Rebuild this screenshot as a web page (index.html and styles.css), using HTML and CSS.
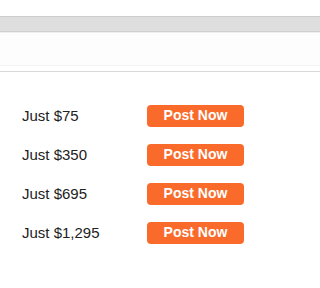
FILE: index.html
```html
<!DOCTYPE html>
<html>
<head>
<meta charset="utf-8">
<link rel="stylesheet" href="styles.css">
</head>
<body>
<div class="page">
  <div class="spacer"></div>
  <div class="tabbar"></div>
  <div class="subbar"></div>
  <div class="gap"></div>
  <div class="list">
    <div class="row"><span class="price">Just $75</span><span class="btn">Post Now</span></div>
    <div class="row"><span class="price">Just $350</span><span class="btn">Post Now</span></div>
    <div class="row"><span class="price">Just $695</span><span class="btn">Post Now</span></div>
    <div class="row"><span class="price">Just $1,295</span><span class="btn">Post Now</span></div>
  </div>
</div>
</body>
</html>
```
FILE: styles.css
```css
html, body {
  margin: 0;
  padding: 0;
  background: #ffffff;
}
.page {
  width: 100%;
  height: 288px;
  overflow: hidden;
  font-family: "Liberation Sans", Arial, sans-serif;
}
.spacer {
  height: 16px;
}
.tabbar {
  height: 14px;
  background: #dedede;
  border-top: 1px solid #cdcdcd;
  border-bottom: 1px solid #d0d0d0;
}
.subbar {
  height: 32px;
  background: #fdfdfd;
  border-top: 1px solid #eeeeee;
  border-bottom: 1px solid #f3f3f3;
}
.gap {
  height: 5px;
}
.list {
  border-top: 1px solid #d9d9d9;
  padding-top: 24px;
  display: flex;
  flex-direction: column;
}
.row {
  height: 39px;
  display: flex;
  align-items: center;
  padding-left: 22px;
}
.price {
  width: 125px;
  font-size: 15px;
  color: #222222;
}
.btn {
  width: 97px;
  height: 22px;
  box-sizing: border-box;
  background: #fa6a2b;
  border-radius: 4px;
  color: #ffffff;
  font-weight: bold;
  font-size: 14px;
  display: flex;
  align-items: center;
  justify-content: center;
  padding-bottom: 1px;
}
```
